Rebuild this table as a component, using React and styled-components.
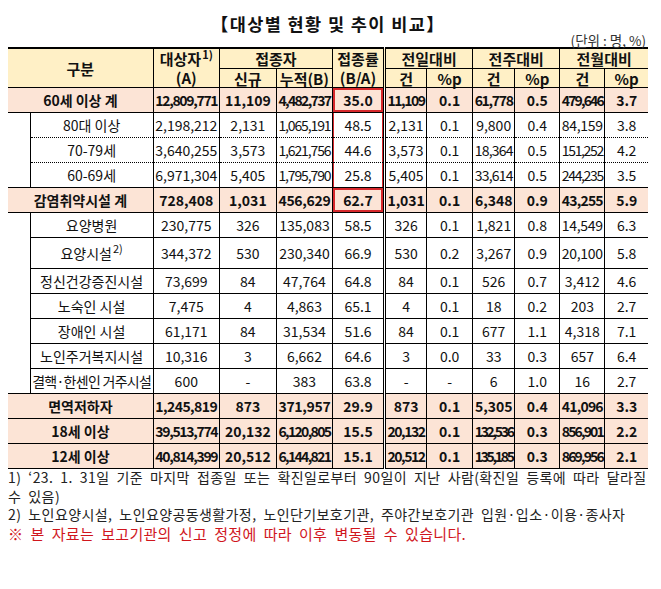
import React, { useLayoutEffect, useRef, useState } from "react";
import styled, { createGlobalStyle, css } from "styled-components";

const GlobalStyle = createGlobalStyle`
  html, body { margin: 0; padding: 0; background: #fff; }
  body { font-family: "Noto Sans CJK KR", "Noto Sans", sans-serif; color: #111; }
`;

const Page = styled.div`
  width: 661px;
  height: 589px;
  box-sizing: border-box;
  padding: 14px 13px 0 8px;
`;

const Title = styled.h1`
  margin: 0;
  text-align: center;
  font-size: 17.5px;
  line-height: 20px;
  letter-spacing: 1.4px;
  font-weight: 700;
  color: #111;
`;

const Unit = styled.div`
  text-align: right;
  font-size: 13.5px;
  line-height: 13px;
  color: #333;
  padding-right: 2px;
`;

const Table = styled.table`
  width: 640px;
  table-layout: fixed;
  border-collapse: collapse;
  border-top: 2px solid #000;
`;

const HeadCell = styled.th`
  border: 1px solid #000;
  border-top: 2px solid #000;
  background: #fff0c6;
  font-size: 15px;
  font-weight: 700;
  line-height: 17px;
  padding: 0;
  height: ${(p) => p.$h || 19}px;
  text-align: center;
  vertical-align: middle;
  white-space: nowrap;
  &:first-child { border-left: none; }
  &:last-child { border-right: none; }
  ${(p) => p.$sub && css`border-top: 1px solid #000;`}
  ${(p) => p.$rate && css`border-right: 3px double #000;`}
`;

const HeadLine = styled.span`
  display: block;
  line-height: 19px;
  height: 19px;
`;

const Cell = styled.td`
  border: 1px solid #000;
  padding: 0 1px;
  height: ${(p) => p.$h || 24}px;
  text-align: center;
  vertical-align: middle;
  font-size: 14px;
  line-height: 18px;
  font-weight: ${(p) => (p.$bold ? 700 : 400)};
  background: ${(p) => (p.$total ? "#fce4d6" : "#fff")};
  white-space: nowrap;
  overflow: hidden;
  &:first-child { border-left: none; }
  &:last-child { border-right: none; }
  ${(p) => p.$dotTop && css`border-top: 1px dotted #000;`}
  ${(p) => p.$dotBottom && css`border-bottom: 1px dotted #000;`}
  ${(p) => p.$rate && css`border-right: 3px double #000;`}
  ${(p) => p.$redBox && css`box-shadow: inset 0 0 0 2px #d6282c;`}
  ${(p) => p.$redSides && css`box-shadow: inset 1px 0 0 #d6282c, inset -1px 0 0 #d6282c;`}
`;

const Indent = styled.td`
  border: 1px solid #000;
  border-left: none;
  background: #fff;
  padding: 0;
`;

const FitSpan = styled.span`
  display: inline-block;
  white-space: nowrap;
`;

const Sup = styled.sup`
  font-size: 11px;
  line-height: 0;
  vertical-align: 6px;
  margin-left: 1px;
`;

const Notes = styled.div`
  margin-top: -1px;
`;

const Note = styled.p`
  margin: 0;
  font-size: 14px;
  line-height: 18.5px;
  color: #222;
  white-space: nowrap;
  letter-spacing: 0.4px;
  word-spacing: 3.5px;
`;

const Warn = styled(Note)`
  color: #d0161d;
  font-size: 15px;
  line-height: 20px;
  letter-spacing: 0.3px;
  word-spacing: 3.5px;
`;

function Fit({ children }) {
  const ref = useRef(null);
  const [ls, setLs] = useState(0);
  useLayoutEffect(() => {
    const measure = () => {
      const el = ref.current;
      if (!el) return;
      const cell = el.parentElement;
      const cs = getComputedStyle(cell);
      const avail =
        cell.clientWidth - parseFloat(cs.paddingLeft) - parseFloat(cs.paddingRight) - 1;
      const w = el.getBoundingClientRect().width;
      const n = el.textContent.length;
      if (w > avail && n > 1) setLs((avail - w) / n);
    };
    measure();
    if (document.fonts && document.fonts.ready) document.fonts.ready.then(measure);
  }, []);
  return (
    <FitSpan ref={ref} style={ls ? { letterSpacing: `${ls}px` } : undefined}>
      {children}
    </FitSpan>
  );
}

const rows = [
  { kind: "total", label: "60세 이상 계", v: ["12,809,771", "11,109", "4,482,737", "35.0", "11,109", "0.1", "61,778", "0.5", "479,646", "3.7"] },
  { kind: "sub", group: 1, label: "80대 이상", v: ["2,198,212", "2,131", "1,065,191", "48.5", "2,131", "0.1", "9,800", "0.4", "84,159", "3.8"] },
  { kind: "sub", group: 1, label: "70-79세", v: ["3,640,255", "3,573", "1,621,756", "44.6", "3,573", "0.1", "18,364", "0.5", "151,252", "4.2"] },
  { kind: "sub", group: 1, label: "60-69세", v: ["6,971,304", "5,405", "1,795,790", "25.8", "5,405", "0.1", "33,614", "0.5", "244,235", "3.5"] },
  { kind: "total", label: "감염취약시설 계", v: ["728,408", "1,031", "456,629", "62.7", "1,031", "0.1", "6,348", "0.9", "43,255", "5.9"] },
  { kind: "sub", group: 2, label: "요양병원", v: ["230,775", "326", "135,083", "58.5", "326", "0.1", "1,821", "0.8", "14,549", "6.3"] },
  { kind: "sub", group: 2, label: "요양시설", sup: "2)", h: 30, v: ["344,372", "530", "230,340", "66.9", "530", "0.2", "3,267", "0.9", "20,100", "5.8"] },
  { kind: "sub", group: 2, label: "정신건강증진시설", v: ["73,699", "84", "47,764", "64.8", "84", "0.1", "526", "0.7", "3,412", "4.6"] },
  { kind: "sub", group: 2, label: "노숙인 시설", v: ["7,475", "4", "4,863", "65.1", "4", "0.1", "18", "0.2", "203", "2.7"] },
  { kind: "sub", group: 2, label: "장애인 시설", v: ["61,171", "84", "31,534", "51.6", "84", "0.1", "677", "1.1", "4,318", "7.1"] },
  { kind: "sub", group: 2, label: "노인주거복지시설", v: ["10,316", "3", "6,662", "64.6", "3", "0.0", "33", "0.3", "657", "6.4"] },
  { kind: "sub", group: 2, label: "결핵·한센인 거주시설", v: ["600", "-", "383", "63.8", "-", "-", "6", "1.0", "16", "2.7"] },
  { kind: "total", label: "면역저하자", v: ["1,245,819", "873", "371,957", "29.9", "873", "0.1", "5,305", "0.4", "41,096", "3.3"] },
  { kind: "total", label: "18세 이상", v: ["39,513,774", "20,132", "6,120,805", "15.5", "20,132", "0.1", "132,536", "0.3", "856,901", "2.2"] },
  { kind: "total", label: "12세 이상", v: ["40,814,399", "20,512", "6,144,821", "15.1", "20,512", "0.1", "135,185", "0.3", "869,956", "2.1"] },
];

const redBoxRows = new Set(["60세 이상 계", "감염취약시설 계"]);
const colWidths = [22, 123, 66, 57, 56, 52, 42, 46, 42, 45, 45, 43];

function DataRow({ row, groupFirst, groupSize, groupPos }) {
  const isTotal = row.kind === "total";
  const dotGroup = row.group === 1;
  const dotTop = dotGroup && groupPos > 0;
  const dotBottom = dotGroup && groupPos < groupSize - 1;
  return (
    <tr>
      {isTotal ? (
        <Cell colSpan={2} $total $bold $h={row.h}>
          <Fit>{row.label}</Fit>
        </Cell>
      ) : (
        <>
          {groupFirst && <Indent rowSpan={groupSize} />}
          <Cell $h={row.h} $dotTop={dotTop} $dotBottom={dotBottom}>
            <Fit>{row.label}</Fit>
            {row.sup && <Sup>{row.sup}</Sup>}
          </Cell>
        </>
      )}
      {row.v.map((val, i) => (
        <Cell
          key={i}
          $h={row.h}
          $total={isTotal}
          $bold={isTotal}
          $rate={i === 3}
          $redBox={i === 3 && redBoxRows.has(row.label)}
          $redSides={i === 3 && dotGroup}
          $dotTop={dotTop}
          $dotBottom={dotBottom}
        >
          <Fit>{val}</Fit>
        </Cell>
      ))}
    </tr>
  );
}

export default function App() {
  const groupInfo = {};
  rows.forEach((r, i) => {
    if (r.kind === "sub") {
      if (!groupInfo[r.group]) groupInfo[r.group] = { first: i, size: 0 };
      groupInfo[r.group].size += 1;
    }
  });

  return (
    <>
      <GlobalStyle />
      <Page>
        <Title>【대상별 현황 및 추이 비교】</Title>
        <Unit>(단위 : 명, %)</Unit>
        <Table>
          <colgroup>
            {colWidths.map((w, i) => (
              <col key={i} style={{ width: w }} />
            ))}
          </colgroup>
          <thead>
            <tr>
              <HeadCell colSpan={2} rowSpan={2}>구분</HeadCell>
              <HeadCell rowSpan={2}>
                <HeadLine>
                  대상자<Sup>1)</Sup>
                </HeadLine>
                <HeadLine>(A)</HeadLine>
              </HeadCell>
              <HeadCell colSpan={2}>접종자</HeadCell>
              <HeadCell rowSpan={2} $rate>
                <HeadLine>접종률</HeadLine>
                <HeadLine>(B/A)</HeadLine>
              </HeadCell>
              <HeadCell colSpan={2}>전일대비</HeadCell>
              <HeadCell colSpan={2}>전주대비</HeadCell>
              <HeadCell colSpan={2}>전월대비</HeadCell>
            </tr>
            <tr>
              <HeadCell $sub $h={18}>신규</HeadCell>
              <HeadCell $sub $h={18}>누적(B)</HeadCell>
              <HeadCell $sub $h={18}>건</HeadCell>
              <HeadCell $sub $h={18}>%p</HeadCell>
              <HeadCell $sub $h={18}>건</HeadCell>
              <HeadCell $sub $h={18}>%p</HeadCell>
              <HeadCell $sub $h={18}>건</HeadCell>
              <HeadCell $sub $h={18}>%p</HeadCell>
            </tr>
          </thead>
          <tbody>
            {rows.map((r, i) => {
              const g = r.kind === "sub" ? groupInfo[r.group] : null;
              return (
                <DataRow
                  key={i}
                  row={r}
                  groupFirst={g ? g.first === i : false}
                  groupSize={g ? g.size : 0}
                  groupPos={g ? i - g.first : 0}
                />
              );
            })}
          </tbody>
        </Table>
        <Notes>
          <Note>
            1) ‘23. 1. 31일 기준 마지막 접종일 또는 확진일로부터 90일이 지난 사람(확진일 등록에 따라 달라질
          </Note>
          <Note>수 있음)</Note>
          <Note>2) 노인요양시설, 노인요양공동생활가정, 노인단기보호기관, 주야간보호기관 입원·입소·이용·종사자</Note>
          <Warn>※ 본 자료는 보고기관의 신고 정정에 따라 이후 변동될 수 있습니다.</Warn>
        </Notes>
      </Page>
    </>
  );
}
